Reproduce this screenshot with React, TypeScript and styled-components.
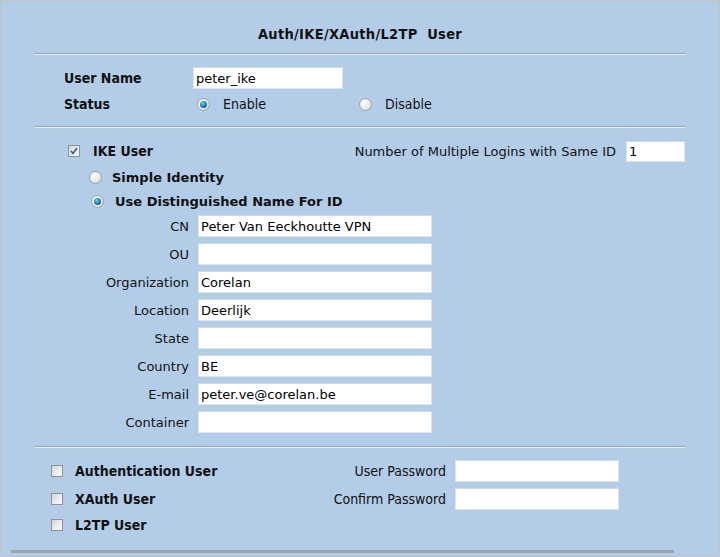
import React from "react";
import styled, { createGlobalStyle } from "styled-components";

const GlobalStyle = createGlobalStyle`
  html, body {
    margin: 0;
    padding: 0;
    background: #b3cde9;
  }
`;

const tahoma = `"DejaVu Sans Condensed", "DejaVu Sans", sans-serif`;
const verdana = `"DejaVu Sans", "Liberation Sans", sans-serif`;

const Page = styled.div`
  width: 720px;
  height: 557px;
  box-sizing: border-box;
  border: 1px solid #c3c3c3;
  background: #b3cde9;
  color: #111;
  font-family: ${tahoma};
  font-size: 14px;
  overflow: hidden;
`;

const Title = styled.div`
  margin-top: 23px;
  height: 20px;
  line-height: 20px;
  text-align: center;
  font-weight: bold;
  font-size: 14.5px;
  letter-spacing: 0.3px;
  white-space: pre;
`;

const Rule = styled.div<{ $top: number }>`
  margin: ${(p) => p.$top}px 0 0 33px;
  width: 652px;
  height: 0;
  border-top: 1px solid #a2a6ab;
  border-bottom: 1px solid #e4edf7;
`;

const BottomRule = styled.div`
  margin: 14px 0 0 10px;
  width: 663px;
  height: 3px;
  background: #a0a4a8;
`;

const UserGrid = styled.div`
  display: grid;
  grid-template-columns: 129px auto;
  grid-auto-rows: 22px;
  row-gap: 4px;
  align-items: center;
  margin-top: 12px;
  padding-left: 63px;
`;

const BoldLabel = styled.span`
  font-weight: bold;
`;

const Input = styled.div<{ $w: number; $h?: number }>`
  width: ${(p) => p.$w}px;
  height: ${(p) => p.$h ?? 22}px;
  box-sizing: border-box;
  background: #fff;
  border: 1px solid #dde4ec;
  border-top-color: #d2d8df;
  padding: 0 2px;
  display: flex;
  align-items: center;
  font-family: ${verdana};
  font-size: 13px;
  color: #000;
  white-space: nowrap;
`;

const RadioGroup = styled.div`
  display: flex;
  align-items: center;
  padding-left: 4px;
`;

const Option = styled.label<{ $w?: number; $gap: number }>`
  display: flex;
  align-items: center;
  gap: ${(p) => p.$gap}px;
  width: ${(p) => (p.$w ? `${p.$w}px` : "auto")};
`;

const Radio = styled.span<{ $on?: boolean }>`
  width: 13px;
  height: 13px;
  box-sizing: border-box;
  border-radius: 50%;
  border: 1px solid #9ea3a8;
  background: radial-gradient(circle at 35% 35%, #ffffff 0%, #e9e9e9 55%, #c8cbce 100%);
  display: flex;
  align-items: center;
  justify-content: center;
  flex: none;
  &::after {
    content: "";
    display: ${(p) => (p.$on ? "block" : "none")};
    width: 7px;
    height: 7px;
    border-radius: 50%;
    background: radial-gradient(circle at 40% 35%, #7fd0f0 0%, #1d87b8 45%, #0c3f66 100%);
  }
`;

const Check = styled.span`
  width: 12px;
  height: 12px;
  box-sizing: border-box;
  border: 1px solid #8f9397;
  background: linear-gradient(135deg, #d2d4d6 0%, #eceeef 60%, #fbfbfb 100%);
  display: flex;
  align-items: center;
  justify-content: center;
  flex: none;
`;

const CheckMark = () => (
  <svg width="8" height="8" viewBox="0 0 8 8">
    <path d="M1 4 L3 6.5 L7 1" fill="none" stroke="#3556b8" strokeWidth="1.6" />
  </svg>
);

const IkeRow = styled.div`
  margin-top: 11px;
  height: 24px;
  display: flex;
  align-items: center;
  justify-content: space-between;
  padding: 0 34px 0 67px;
`;

const LoginsBox = styled.div`
  display: flex;
  align-items: center;
  gap: 10px;
  font-family: ${verdana};
  font-size: 13px;
`;

const IdRow = styled.div<{ $indent: number; $gap: number; $top: number }>`
  height: 24px;
  margin-top: ${(p) => p.$top}px;
  display: flex;
  align-items: center;
  gap: ${(p) => p.$gap}px;
  padding-left: ${(p) => p.$indent}px;
  font-family: ${verdana};
  font-size: 13px;
  font-weight: bold;
`;

const DnGrid = styled.div`
  display: grid;
  grid-template-columns: 99px 234px;
  grid-auto-rows: 22px;
  column-gap: 9px;
  row-gap: 6px;
  align-items: center;
  margin-top: 2px;
  padding-left: 89px;
  font-family: ${verdana};
  font-size: 13px;
`;

const RightLabel = styled.span`
  text-align: right;
  white-space: nowrap;
`;

const UsersBlock = styled.div`
  margin-top: 12px;
  padding-left: 50px;
`;

const UsersRow = styled.div<{ $top: number }>`
  display: grid;
  grid-template-columns: 260px 126px 164px;
  column-gap: 9px;
  height: 22px;
  align-items: center;
  margin-top: ${(p) => p.$top}px;
`;

const dnFields: [string, string][] = [
  ["CN", "Peter Van Eeckhoutte VPN"],
  ["OU", ""],
  ["Organization", "Corelan"],
  ["Location", "Deerlijk"],
  ["State", ""],
  ["Country", "BE"],
  ["E-mail", "peter.ve@corelan.be"],
  ["Container", ""],
];

const userTypes = [
  { name: "Authentication User", label: "User Password", top: 0 },
  { name: "XAuth User", label: "Confirm Password", top: 6 },
  { name: "L2TP User", label: "", top: 4 },
];

export default function App() {
  return (
    <Page>
      <GlobalStyle />
      <Title>{"Auth/IKE/XAuth/L2TP  User"}</Title>
      <Rule $top={9} />

      <UserGrid>
        <BoldLabel>User Name</BoldLabel>
        <Input $w={150}>peter_ike</Input>
        <BoldLabel>Status</BoldLabel>
        <RadioGroup>
          <Option $w={162} $gap={13}>
            <Radio $on />
            Enable
          </Option>
          <Option $gap={13}>
            <Radio />
            Disable
          </Option>
        </RadioGroup>
      </UserGrid>
      <Rule $top={11} />

      <IkeRow>
        <Option $gap={13}>
          <Check>
            <CheckMark />
          </Check>
          <BoldLabel>IKE User</BoldLabel>
        </Option>
        <LoginsBox>
          Number of Multiple Logins with Same ID
          <Input $w={59} $h={21}>1</Input>
        </LoginsBox>
      </IkeRow>
      <IdRow $indent={88} $gap={10} $top={2}>
        <Radio />
        Simple Identity
      </IdRow>
      <IdRow $indent={90} $gap={11} $top={0}>
        <Radio $on />
        Use Distinguished Name For ID
      </IdRow>

      <DnGrid>
        {dnFields.map(([label, value]) => (
          <React.Fragment key={label}>
            <RightLabel>{label}</RightLabel>
            <Input $w={234}>{value}</Input>
          </React.Fragment>
        ))}
      </DnGrid>
      <Rule $top={13} />

      <UsersBlock>
        {userTypes.map((u) => (
          <UsersRow key={u.name} $top={u.top}>
            <Option $gap={12}>
              <Check />
              <BoldLabel>{u.name}</BoldLabel>
            </Option>
            {u.label && <RightLabel>{u.label}</RightLabel>}
            {u.label && <Input $w={164} />}
          </UsersRow>
        ))}
      </UsersBlock>
      <BottomRule />
    </Page>
  );
}
